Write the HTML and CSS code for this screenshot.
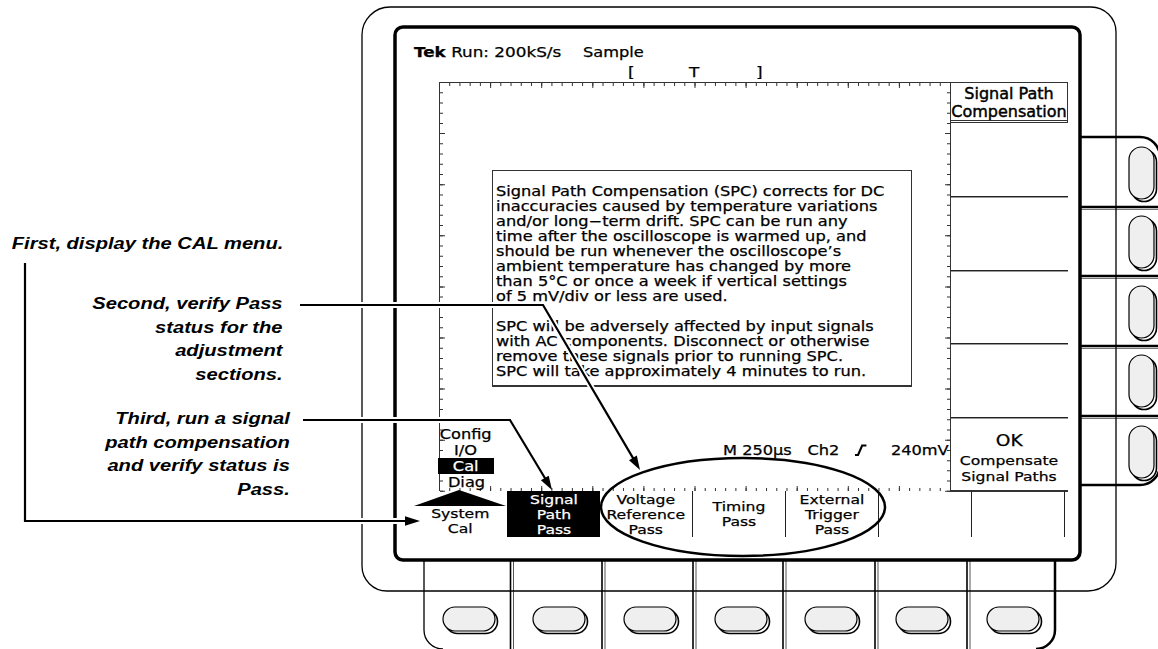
FILE: index.html
```html
<!DOCTYPE html>
<html lang="en">
<head>
    <meta charset="UTF-8">
    <title>Signal Path Compensation</title>
    <link rel="stylesheet" href="styles.css">
</head>
<body>
<div class="figure">

    <!-- instrument drawing: bezel, buttons, graticule -->
    <svg class="art" width="1158" height="649" viewBox="0 0 1158 649">
        <!-- side button panel -->
        <path d="M1080 137 H1140 A20 20 0 0 1 1160 157 V465 A20 20 0 0 1 1140 485 H1080" fill="#fff" stroke="#000" stroke-width="2.5"/>
        <g stroke="#000" stroke-width="2.5">
            <line x1="1080" y1="207" x2="1158" y2="207"/>
            <line x1="1080" y1="276" x2="1158" y2="276"/>
            <line x1="1080" y1="346" x2="1158" y2="346"/>
            <line x1="1080" y1="416" x2="1158" y2="416"/>
        </g>
        <g stroke="#777" stroke-width="1">
            <line x1="1080" y1="209.5" x2="1158" y2="209.5"/>
            <line x1="1080" y1="278.5" x2="1158" y2="278.5"/>
            <line x1="1080" y1="348.5" x2="1158" y2="348.5"/>
            <line x1="1080" y1="418.5" x2="1158" y2="418.5"/>
        </g>

        <!-- bottom button panel -->
        <path d="M424 560 V630 A19 19 0 0 0 443 649" fill="none" stroke="#000" stroke-width="1.3"/>
        <path d="M1055 560 V630 A19 19 0 0 1 1036 649" fill="none" stroke="#000" stroke-width="2.5"/>
        <g stroke="#000" stroke-width="1.6">
            <line x1="510.5" y1="560" x2="510.5" y2="649"/>
            <line x1="602" y1="560" x2="602" y2="649"/>
            <line x1="693" y1="560" x2="693" y2="649"/>
            <line x1="783" y1="560" x2="783" y2="649"/>
            <line x1="875" y1="560" x2="875" y2="649"/>
            <line x1="967" y1="560" x2="967" y2="649"/>
        </g>
        <g stroke="#555" stroke-width="1">
            <line x1="513.5" y1="560" x2="513.5" y2="649"/>
            <line x1="605" y1="560" x2="605" y2="649"/>
            <line x1="696" y1="560" x2="696" y2="649"/>
            <line x1="786" y1="560" x2="786" y2="649"/>
            <line x1="878" y1="560" x2="878" y2="649"/>
            <line x1="970" y1="560" x2="970" y2="649"/>
        </g>

        <!-- outer bezel -->
        <path d="M390 7 H1091 A25 25 0 0 1 1116 32 V563 A28 28 0 0 1 1088 591 H387 A25 25 0 0 1 362 566 V35 A28 28 0 0 1 390 7 Z" fill="none" stroke="#000" stroke-width="1.3"/>

        <!-- screen frame -->
        <rect x="395" y="27" width="685" height="533" rx="8" fill="#fff" stroke="#000" stroke-width="3.5"/>

        <!-- side buttons -->
        <g class="btn">
            <rect x="1131.5" y="149.5" width="25" height="52" rx="12.5" class="btn-back"/>
            <rect x="1129" y="147" width="25" height="52" rx="12.5" class="btn-face"/>
            <rect x="1131.5" y="218.5" width="25" height="52" rx="12.5" class="btn-back"/>
            <rect x="1129" y="216" width="25" height="52" rx="12.5" class="btn-face"/>
            <rect x="1131.5" y="288.5" width="25" height="52" rx="12.5" class="btn-back"/>
            <rect x="1129" y="286" width="25" height="52" rx="12.5" class="btn-face"/>
            <rect x="1131.5" y="357.5" width="25" height="52" rx="12.5" class="btn-back"/>
            <rect x="1129" y="355" width="25" height="52" rx="12.5" class="btn-face"/>
            <rect x="1131.5" y="428.5" width="25" height="52" rx="12.5" class="btn-back"/>
            <rect x="1129" y="426" width="25" height="52" rx="12.5" class="btn-face"/>
        </g>

        <!-- bottom buttons -->
        <g class="btn">
            <rect x="445.5" y="609.5" width="52" height="24" rx="12" class="btn-back"/>
            <rect x="443" y="607" width="52" height="24" rx="12" class="btn-face"/>
            <rect x="535.5" y="609.5" width="52" height="24" rx="12" class="btn-back"/>
            <rect x="533" y="607" width="52" height="24" rx="12" class="btn-face"/>
            <rect x="626.5" y="609.5" width="52" height="24" rx="12" class="btn-back"/>
            <rect x="624" y="607" width="52" height="24" rx="12" class="btn-face"/>
            <rect x="717.5" y="609.5" width="52" height="24" rx="12" class="btn-back"/>
            <rect x="715" y="607" width="52" height="24" rx="12" class="btn-face"/>
            <rect x="807.5" y="609.5" width="52" height="24" rx="12" class="btn-back"/>
            <rect x="805" y="607" width="52" height="24" rx="12" class="btn-face"/>
            <rect x="898.5" y="609.5" width="52" height="24" rx="12" class="btn-back"/>
            <rect x="896" y="607" width="52" height="24" rx="12" class="btn-face"/>
            <rect x="989.5" y="609.5" width="52" height="24" rx="12" class="btn-back"/>
            <rect x="987" y="607" width="52" height="24" rx="12" class="btn-face"/>
        </g>

        <!-- graticule -->
        <g stroke="#333" fill="none">
            <line x1="439" y1="82.5" x2="951" y2="82.5" stroke-width="1"/>
            <line x1="439.5" y1="82" x2="439.5" y2="491" stroke-width="1"/>
            <line x1="950.5" y1="82" x2="950.5" y2="491" stroke-width="1"/>
            <line x1="950" y1="491.5" x2="1068" y2="491.5" stroke-width="1"/>
            <line x1="439" y1="84.5" x2="951" y2="84.5" stroke-width="3" stroke-dasharray="1 9.22"/>
            <line x1="439" y1="85.5" x2="951" y2="85.5" stroke-width="5" stroke-dasharray="1 50.1"/>
            <line x1="439" y1="489.5" x2="951" y2="489.5" stroke-width="3" stroke-dasharray="1 9.22"/>
            <line x1="439" y1="488.5" x2="951" y2="488.5" stroke-width="5" stroke-dasharray="1 50.1"/>
            <line x1="441.5" y1="82" x2="441.5" y2="492" stroke-width="3" stroke-dasharray="1 9.22"/>
            <line x1="442.5" y1="82" x2="442.5" y2="492" stroke-width="5" stroke-dasharray="1 50.1"/>
            <line x1="948.5" y1="82" x2="948.5" y2="492" stroke-width="3" stroke-dasharray="1 9.22"/>
            <line x1="947.5" y1="82" x2="947.5" y2="492" stroke-width="5" stroke-dasharray="1 50.1"/>
        </g>

        <!-- menu pointer above System Cal -->
        <polygon points="414,506 459,490 506,506" fill="#000"/>
    </svg>

    <!-- screen readouts -->
    <div class="readout tek"><b>Tek</b> Run: 200kS/s</div>
    <div class="readout sample">Sample</div>
    <div class="readout mark-l">[</div>
    <div class="readout mark-t">T</div>
    <div class="readout mark-r">]</div>

    <div class="spc-box">
        <p>Signal Path Compensation (SPC) corrects for DC<br>inaccuracies caused by temperature variations<br>and/or long&minus;term drift. SPC can be run any<br>time after the oscilloscope is warmed up, and<br>should be run whenever the oscilloscope&rsquo;s<br>ambient temperature has changed by more<br>than 5&deg;C or once a week if vertical settings<br>of 5 mV/div or less are used.</p>
        <p>SPC will be adversely affected by input signals<br>with AC components. Disconnect or otherwise<br>remove these signals prior to running SPC.<br>SPC will take approximately 4 minutes to run.</p>
    </div>

    <div class="status">
        <span>M 250&micro;s</span>
        <span>Ch2</span>
        <svg class="slope" width="10" height="12" viewBox="0 0 10 12"><polyline points="0,11 2.5,11 6,1.5 9.5,1.5" fill="none" stroke="#000" stroke-width="1.8"/></svg>
        <span>240mV</span>
    </div>

    <!-- side menu -->
    <div class="side-menu">
        <div class="side-title">Signal Path<br>Compensation</div>
        <div class="side-slot"></div>
        <div class="side-slot"></div>
        <div class="side-slot short"></div>
        <div class="side-slot"></div>
        <div class="side-ok">
            <span class="wide ok">OK</span>
            <span class="wide sub">Compensate<br>Signal Paths</span>
        </div>
    </div>

    <!-- utility menu stack -->
    <div class="utility">
        <span class="wide">Config</span>
        <span class="wide">I/O</span>
        <span class="pick"><span class="wide">Cal</span></span>
        <span class="wide">Diag</span>
    </div>

    <!-- bottom menu -->
    <div class="menu-row">
        <div class="cell low"><span class="wide">System<br>Cal</span></div>
        <div class="cell on"><span class="wide">Signal<br>Path<br>Pass</span></div>
        <div class="cell ruled"><span class="wide">Voltage<br>Reference<br>Pass</span></div>
        <div class="cell ruled"><span class="wide">Timing<br>Pass</span></div>
        <div class="cell ruled"><span class="wide">External<br>Trigger<br>Pass</span></div>
        <div class="cell ruled"></div>
        <div class="cell ruled"></div>
    </div>

    <!-- callouts -->
    <p class="note note-first">First, display the CAL menu.</p>
    <p class="note note-second">Second, verify Pass<br>status for the<br>adjustment<br>sections.</p>
    <p class="note note-third">Third, run a signal<br>path compensation<br>and verify status is<br>Pass.</p>

    <svg class="leaders" width="1158" height="649" viewBox="0 0 1158 649">
        <g fill="none" stroke="#fff" stroke-width="6">
            <path d="M25 263 V521 H405"/>
            <path d="M300 305 H543 L632.9 457.9"/>
            <path d="M303 420 H510 L544.8 478"/>
        </g>
        <g fill="none" stroke="#000" stroke-width="2.2">
            <path d="M25 263 V521 H406"/>
            <path d="M300 305 H543 L633.5 458.9"/>
            <path d="M303 420 H510 L545.5 479"/>
        </g>
        <g fill="#000">
            <polygon points="420,521 405,516.3 405,525.7"/>
            <polygon points="640,470 629,460.2 636.8,455.6"/>
            <polygon points="552,490 540.9,480.3 548.7,475.7"/>
        </g>
        <ellipse cx="743" cy="507" rx="142" ry="49" fill="none" stroke="#000" stroke-width="2.5"/>
    </svg>
</div>
</body>
</html>
```

FILE: styles.css
```css
body {
    margin: 0;
    background: #fff;
}

.figure {
    position: relative;
    width: 1158px;
    height: 649px;
    overflow: hidden;
    font-family: "DejaVu Sans", "Noto Sans", sans-serif;
    color: #000;
    -webkit-text-stroke: 0.25px #000;
}

.art,
.leaders {
    position: absolute;
    left: 0;
    top: 0;
}

.leaders {
    pointer-events: none;
}

.btn-back {
    fill: none;
    stroke: #000;
    stroke-width: 1.6;
}

.btn-face {
    fill: #efefef;
    stroke: #000;
    stroke-width: 1.2;
}

/* the scope's screen font runs wide */
.wide {
    display: inline-block;
    transform: scaleX(1.2);
}

.readout {
    position: absolute;
    top: 44px;
    font-size: 14px;
    line-height: 16px;
    white-space: nowrap;
    transform: scaleX(1.2);
    transform-origin: left top;
}

.tek { left: 414px; }
.sample { left: 583px; font-size: 13.5px; }
.mark-l { left: 628px; top: 64px; }
.mark-t { left: 689px; top: 64px; }
.mark-r { left: 756px; top: 64px; }

.spc-box {
    position: absolute;
    left: 492px;
    top: 170px;
    width: 420px;
    height: 217px;
    box-sizing: border-box;
    border: 1px solid #333;
    border-bottom-width: 2px;
    background: #fff;
    padding: 13px 0 0 3px;
    font-size: 13.5px;
    line-height: 15px;
}

.spc-box p {
    margin: 0 0 15px;
    white-space: nowrap;
    transform: scaleX(1.2);
    transform-origin: left top;
}

.status {
    position: absolute;
    left: 723px;
    top: 442px;
    display: flex;
    align-items: center;
    gap: 13px;
    font-size: 13.5px;
    line-height: 16px;
    white-space: nowrap;
    transform: scaleX(1.2);
    transform-origin: left top;
}

.status .slope {
    margin-right: 7px;
}

.side-menu {
    position: absolute;
    left: 951px;
    top: 82px;
    width: 117px;
    display: flex;
    flex-direction: column;
}

.side-title {
    height: 41px;
    box-sizing: border-box;
    border: 1px solid #333;
    border-left: none;
    border-bottom: 3px double #333;
    padding-top: 2px;
    font-size: 16px;
    line-height: 18px;
    text-align: center;
    white-space: nowrap;
    -webkit-text-stroke: 0.45px #000;
}

.side-slot {
    height: 74px;
    box-sizing: border-box;
    border-bottom: 1px solid #222;
    box-shadow: 0 1px 0 #999;
}

.side-slot.short {
    height: 73px;
}

.side-ok {
    height: 73px;
    box-sizing: border-box;
    border-bottom: 1px solid #333;
    padding-top: 14px;
    display: flex;
    flex-direction: column;
    align-items: center;
    text-align: center;
}

.side-ok .ok {
    font-size: 15.5px;
    line-height: 18px;
}

.side-ok .sub {
    margin-top: 3px;
    font-size: 13px;
    line-height: 15.5px;
    white-space: nowrap;
}

.utility {
    position: absolute;
    left: 438px;
    top: 426px;
    width: 56px;
    display: flex;
    flex-direction: column;
    align-items: center;
    font-size: 13.5px;
    line-height: 16px;
}

.utility .pick {
    align-self: stretch;
    text-align: center;
    background: #000;
    color: #fff;
    -webkit-text-stroke: 0.25px #fff;
}

.menu-row {
    position: absolute;
    left: 414px;
    top: 491px;
    display: flex;
}

.cell {
    width: 93px;
    height: 46px;
    box-sizing: border-box;
    display: flex;
    flex-direction: column;
    justify-content: center;
    align-items: center;
    text-align: center;
    font-size: 13px;
    line-height: 15px;
    white-space: nowrap;
}

.cell.low {
    justify-content: flex-end;
    padding-bottom: 1px;
}

.cell.on {
    background: #000;
    color: #fff;
    -webkit-text-stroke: 0.25px #fff;
}

.cell.ruled {
    border-right: 1.5px solid #222;
}

.note {
    position: absolute;
    margin: 0;
    font-family: "Liberation Sans", Arial, sans-serif;
    font-style: italic;
    font-weight: bold;
    font-size: 16.8px;
    line-height: 23.7px;
    text-align: right;
    white-space: nowrap;
    transform: scaleX(1.2);
    transform-origin: right top;
    -webkit-text-stroke: 0;
}

.note-first { right: 875px; top: 232px; }
.note-second { right: 875px; top: 292px; }
.note-third { right: 868px; top: 407px; }
```
